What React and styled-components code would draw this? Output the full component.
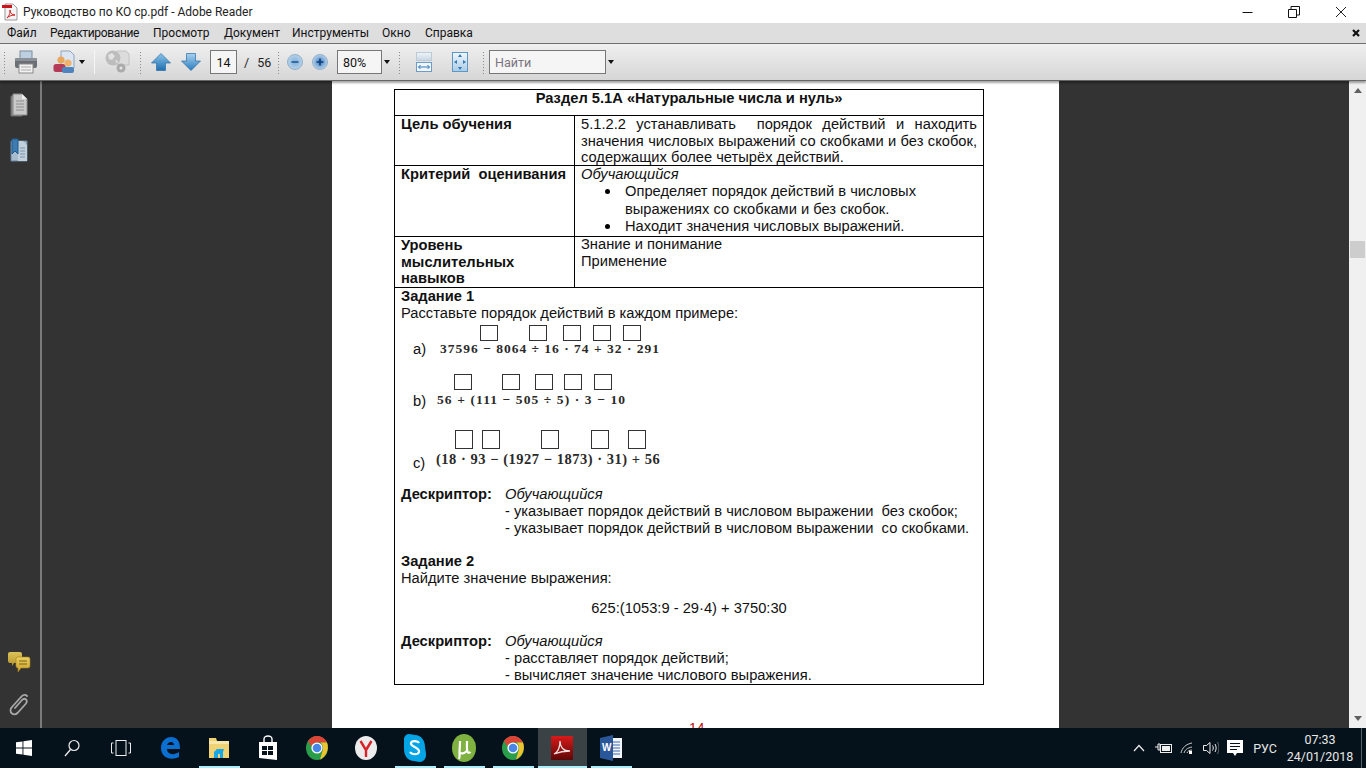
import React from "react";
import styled, { createGlobalStyle } from "styled-components";

const Global = createGlobalStyle`
  html, body { margin: 0; padding: 0; width: 1366px; height: 768px; overflow: hidden; background: #333; }
  * { box-sizing: border-box; }
`;
const UI = `Roboto, "Open Sans", "Liberation Sans", sans-serif`;
const DOC = `"Liberation Sans", Arial, sans-serif`;

const Screen = styled.div`width:1366px;height:768px;display:flex;flex-direction:column;overflow:hidden;`;
const TitleBar = styled.div`height:23px;background:#fff;display:flex;align-items:center;flex:none;`;
const TitleIcon = styled.span`display:flex;margin:0 5px 0 2px;`;
const TitleText = styled.span`font:12px ${UI};color:#222;flex:1;white-space:nowrap;`;
const WinBtn = styled.span`width:46px;height:23px;display:flex;align-items:center;justify-content:center;`;
const WinBtns = styled.div`display:flex;padding-right:2px;gap:1px;`;

const MenuBar = styled.div`height:21px;background:#dedede;border-bottom:1px solid #6f6f6f;display:flex;align-items:center;flex:none;padding-left:7px;`;
const MenuItem = styled.span`font:12px ${UI};color:#111;width:${p=>p.$w}px;letter-spacing:${p=>p.$ls||0}px;white-space:nowrap;`;
const MenuClose = styled.span`margin-left:auto;margin-right:6px;display:flex;`;

const Toolbar = styled.div`height:37px;flex:none;background:linear-gradient(#efefef,#d6d6d6);border-bottom:1px solid #666;display:flex;align-items:center;padding-left:3px;position:relative;z-index:2;box-shadow:0 2px 2px rgba(0,0,0,.35);`;
const Grip = styled.span`width:3px;height:23px;margin-left:${p=>p.$ml||0}px;flex:none;background-image:radial-gradient(#8c8c8c 0.7px,transparent 0.8px);background-size:3px 3px;`;
const Tool = styled.span`display:flex;flex:none;margin-left:${p=>p.$ml||0}px;`;
const Drop = styled.span`flex:none;margin-left:${p=>p.$ml||0}px;width:0;height:0;border-left:3.5px solid transparent;border-right:3.5px solid transparent;border-top:4px solid #111;`;
const Sep = styled.span`flex:none;width:1px;height:24px;background:#c4c4c4;border-right:1px solid #f6f6f6;margin-left:${p=>p.$ml||0}px;`;
const Field = styled.span`flex:none;height:24px;width:${p=>p.$w}px;margin-left:${p=>p.$ml||0}px;background:#f5f5f5;border:1px solid #777;font:12.5px ${UI};color:${p=>p.$muted?"#7c7480":"#111"};display:flex;align-items:center;justify-content:${p=>p.$center?"center":"flex-start"};padding-left:${p=>p.$center?0:5}px;`;
const PageOf = styled.span`flex:none;font:12.5px ${UI};color:#222;margin-left:7px;width:29px;word-spacing:5px;white-space:nowrap;`;

const Body = styled.div`flex:1;min-height:0;display:flex;background:#333;overflow:hidden;`;
const NavPane = styled.div`width:42px;flex:none;border-right:2px solid #7b7b7b;background:#333;display:flex;flex-direction:column;align-items:center;padding:12px 2px 0 0;`;
const NavSpacer = styled.div`flex:1;`;
const NavIcon = styled.span`display:flex;margin-bottom:${p=>p.$mb||0}px;`;
const Gutter = styled.div`flex:1;min-width:0;display:flex;padding-left:290px;overflow:hidden;`;
const Page = styled.div`width:727px;height:660px;background:#fff;flex:none;padding:8px 0 0 62px;`;
const Table = styled.div`width:590px;border:1px solid #000;font:14.7px/16.6px ${DOC};color:#111;display:flex;flex-direction:column;`;
const Head = styled.div`height:26px;font-weight:700;text-align:center;line-height:17px;border-bottom:1px solid #000;`;
const Row = styled.div`height:${p=>p.$h}px;display:grid;grid-template-columns:180px 1fr;border-bottom:1px solid #000;`;
const Label = styled.div`font-weight:700;padding:0 6px;border-right:1px solid #000;line-height:${p=>p.$lh||16.6}px;word-spacing:${p=>p.$ws||0}px;`;
const Cell = styled.div`padding:0 6px;line-height:${p=>p.$lh||16.6}px;margin-top:${p=>p.$dy||0}px;`;
const Just = styled.div`text-align:justify;`;
const Em = styled.i``;
const Bullets = styled.ul`margin:0;padding:0 0 0 44px;list-style:none;`;
const Bullet = styled.li`position:relative;padding-right:50px;&::before{content:"";position:absolute;left:-20px;top:6px;width:5px;height:5px;border-radius:50%;background:#000;}`;
const Task = styled.div`height:396px;padding:0 6px;line-height:17px;`;
const B = styled.b``;
const MathBlock = styled.div`margin-top:${p=>p.$mt}px;height:${p=>p.$h}px;`;
const Boxes = styled.div`display:flex;padding-left:${p=>p.$pl}px;`;
const Box = styled.span`flex:none;width:18px;height:${p=>p.$h||16}px;border:1px solid #333;margin-left:${p=>p.$ml||0}px;`;
const FormulaLine = styled.div`display:flex;align-items:flex-start;margin-top:${p=>p.$mt||0}px;padding-left:12px;`;
const Letter = styled.span`width:${p=>p.$w}px;flex:none;margin-top:${p=>p.$dy||0}px;`;
const Formula = styled.span`font:700 ${p=>p.$fs}px/16px "Liberation Serif", serif;color:#2a2a2a;letter-spacing:${p=>p.$ls||0}px;margin-top:${p=>p.$dy||0}px;white-space:nowrap;`;
const Gap = styled.div`height:${p=>p.$h}px;`;
const Desc = styled.div`display:grid;grid-template-columns:104px 1fr;`;
const Center = styled.div`text-align:center;`;
const PageNo = styled.div`margin:35px 0 0 0;width:590px;padding-left:295px;font:14px/16px ${DOC};color:#b11;`;

const ScrollBar = styled.div`width:17px;flex:none;background:#f0f0f0;position:relative;display:flex;flex-direction:column;align-items:center;justify-content:space-between;padding:7px 0;`;
const Thumb = styled.div`position:absolute;left:1px;top:160px;width:15px;height:17px;background:#cdcdcd;`;
const Arrow = styled.span`width:0;height:0;border-left:4px solid transparent;border-right:4px solid transparent;${p=>p.$down?"border-top:5px solid #606060;":"border-bottom:5px solid #606060;"}`;

const TaskBar = styled.div`height:40px;flex:none;background:#06121b;display:flex;align-items:stretch;position:relative;z-index:3;`;
const TBtn = styled.span`width:${p=>p.$w||49}px;flex:none;display:flex;align-items:center;justify-content:center;position:relative;background:${p=>p.$active?"#3a4246":"transparent"};
  ${p=>p.$open?`&::after{content:"";position:absolute;left:${p.$active?0:4}px;right:${p.$active?0:4}px;bottom:0;height:2px;background:#a9eefa;}`:""}`;
const Tray = styled.div`margin-left:auto;display:flex;align-items:center;color:#fff;`;
const TrayIcon = styled.span`display:flex;width:${p=>p.$w}px;justify-content:center;`;
const Lang = styled.span`font:12.5px ${UI};color:#e8e8e8;width:36px;text-align:center;`;
const Clock = styled.div`width:74px;font:12.5px/17px ${UI};color:#e8e8e8;text-align:center;`;
const Desktop = styled.span`width:5px;align-self:stretch;border-left:1px solid #59626a;margin-left:4px;`;

/* ---------- icons ---------- */
const PdfDoc = () => (
  <svg width="16" height="18" viewBox="0 0 16 18"><path d="M3 1h8l4 4v12H3z" fill="#f4f4f4" stroke="#999"/><rect x="0" y="2" width="10" height="3" fill="#c8141a"/><path d="M5 15c3-3 3-6 3-8 0 3 2 5 5 5-3 0-6 1-8 3z" fill="none" stroke="#d01c1c" strokeWidth="1"/></svg>
);
const Minimize = () => <svg width="12" height="12"><path d="M1.500 6.500h10" stroke="#111" strokeWidth="1"/></svg>;
const Restore = () => <svg width="12" height="12"><path d="M.5 3.500h8v8h-8zM3 3V.5h8.500V9H9" fill="none" stroke="#111"/></svg>;
const CloseX = () => <svg width="12" height="12"><path d="M1 1l10 10M11 1L1 11" stroke="#222" strokeWidth="1"/></svg>;
const SmallX = () => <svg width="8" height="8"><path d="M1 1l6 6M7 1L1 7" stroke="#111" strokeWidth="2.200"/></svg>;

const Print = () => (
  <svg width="24" height="24" viewBox="0 0 24 24"><rect x="6" y="1" width="12" height="8" fill="#bcd0e2" stroke="#7f8e9b"/><rect x="1" y="8" width="22" height="10" rx="2" fill="#6a6f75"/><rect x="1" y="8" width="22" height="3" rx="1" fill="#8b9096"/><rect x="5" y="14" width="14" height="9" fill="#f2f2f2" stroke="#8a8a8a"/><path d="M7 17h10M7 20h10" stroke="#aaa"/></svg>
);
const Share = () => (
  <svg width="24" height="24" viewBox="0 0 24 24"><path d="M9 1h9l4 4v13H9z" fill="#dbe6f2" stroke="#8ea4bb"/><circle cx="9" cy="10" r="3.600" fill="#eba65a"/><rect x="1.500" y="14" width="12" height="8" rx="2.500" fill="#b33b58"/><circle cx="16" cy="13" r="3.600" fill="#f0b26a"/><rect x="10" y="17" width="12" height="6" rx="2" fill="#4d84bd"/></svg>
);
const Globe = () => (
  <svg width="26" height="24" viewBox="0 0 26 24"><path d="M13 1h9l3 3v11H13z" fill="#dcdcdc" stroke="#c2c2c2"/><circle cx="9" cy="8" r="7.500" fill="#bdbdbd"/><path d="M4 5l4-2 3 3-3 4-3-1zM11 10l3 1-1 3z" fill="#e2e2e2"/><circle cx="17" cy="18" r="4.500" fill="#ababab"/><circle cx="17" cy="18" r="1.500" fill="#e6e6e6"/></svg>
);
const Grad = ({ id, a, b }) => <linearGradient id={id} x1="0" y1="0" x2="0" y2="1"><stop offset="0" stopColor={a}/><stop offset="1" stopColor={b}/></linearGradient>;
const UpArrow = () => (
  <svg width="20" height="20" viewBox="0 0 20 20"><defs><Grad id="u" a="#8cc4ea" b="#1e6eb0"/></defs><path d="M10 1.500L19.500 11H14.500V18.500H5.500V11H.5z" fill="url(#u)" stroke="#2a6ea6" strokeWidth=".7"/></svg>
);
const DownArrow = () => (
  <svg width="20" height="20" viewBox="0 0 20 20"><defs><Grad id="d" a="#a8d2f0" b="#2a7cbe"/></defs><path d="M5.500 1.500H14.500V9H19.500L10 18.500.5 9H5.500z" fill="url(#d)" stroke="#2a6ea6" strokeWidth=".7"/></svg>
);
const ZoomBtn = ({ plus }) => (
  <svg width="16" height="16" viewBox="0 0 16 16"><defs><radialGradient id={plus?"zp":"zm"}><stop offset="0" stopColor={plus?"#3d7fc7":"#7fb0dc"}/><stop offset="1" stopColor="#b9d2e8"/></radialGradient></defs><circle cx="8" cy="8" r="7.500" fill={`url(#${plus?"zp":"zm"})`} stroke="#8fb0cc"/><path d={plus?"M4.500 8h7M8 4.500v7":"M4.500 8h7"} stroke={plus?"#0e3e78":"#1d5a94"} strokeWidth="1.600"/></svg>
);
const FitWidth = () => (
  <svg width="16" height="20" viewBox="0 0 16 20"><defs><Grad id="fw" a="#f2f4f6" b="#c5d6e6"/></defs><rect x=".5" y=".5" width="15" height="8" fill="url(#fw)" stroke="#bccbd8"/><rect x=".5" y="10.500" width="15" height="9" fill="#f2f6fa" stroke="#6b9bc6"/><path d="M2.500 15h11M2.500 15l2-2M2.500 15l2 2M13.500 15l-2-2M13.500 15l-2 2" stroke="#2d78b8" fill="none"/></svg>
);
const FullFit = () => (
  <svg width="16" height="20" viewBox="0 0 16 20"><defs><Grad id="ff" a="#f2f7fb" b="#a9cbe6"/></defs><rect x=".5" y=".5" width="15" height="19" fill="url(#ff)" stroke="#5f97c4"/><path d="M8 2l-2 3h4zM8 18l-2-3h4zM2 10l3-2v4zM14 10l-3-2v4z" fill="#2d78b8"/></svg>
);
const NavPages = () => (
  <svg width="18" height="24" viewBox="0 0 18 24"><path d="M1 3h11v20H1z" fill="#8d8d8d" stroke="#6a6a6a"/><path d="M3 1h9l5 5v16H3z" fill="#c9c9c9" stroke="#8a8a8a"/><path d="M12 1v5h5z" fill="#eee"/><path d="M6 8h8M6 11h8M6 14h8M6 17h8" stroke="#8e8e8e"/></svg>
);
const NavBookmarks = () => (
  <svg width="18" height="24" viewBox="0 0 18 24"><path d="M1 3h16v20H1z" fill="#a9bccd" stroke="#64819b"/><path d="M8 3h5l4 4v16H8z" fill="#c2d0dd"/><path d="M2 1h6v15l-3-3-3 3z" fill="#3d7bb0" stroke="#1f5a8c"/><path d="M10 10h5M10 13h5M10 16h5M10 19h5" stroke="#7d93a8"/></svg>
);
const NavComments = () => (
  <svg width="24" height="21" viewBox="0 0 24 21"><defs><Grad id="cb" a="#dcc25a" b="#b7962a"/><Grad id="cf" a="#ecd060" b="#c9a02c"/></defs><path d="M1 2a2 2 0 0 1 2-2h10a2 2 0 0 1 2 2v7a2 2 0 0 1-2 2H7l-2 3v-3H3a2 2 0 0 1-2-2z" fill="url(#cb)"/><path d="M9 7a2 2 0 0 1 2-2h10a2 2 0 0 1 2 2v7a2 2 0 0 1-2 2H14l-3 4v-4a2 2 0 0 1-2-2z" fill="url(#cf)" stroke="#a3801d" strokeWidth=".6"/><path d="M12 9h8M12 12h8" stroke="#7c6215"/></svg>
);
const NavClip = () => (
  <svg width="22" height="24" viewBox="0 0 22 24"><path d="M19 3c-2-2-4-1-6 1L4 14c-2 2-2 5 0 6.500s4 1 6-1l8-9c1-1.500 1-3 0-4s-2.500-1-4 .5L7 15" fill="none" stroke="#a8a8a8" strokeWidth="1.800" strokeLinecap="round"/></svg>
);

const WinLogo = () => <svg width="16" height="16" viewBox="0 0 16 16"><path d="M0 2.300 6.500 1.400v6.200H0zM7.400 1.300 16 0v7.600H7.400zM0 8.400h6.500v6.200L0 13.700zM7.400 8.400H16V16l-8.600-1.300z" fill="#fff"/></svg>;
const SearchGl = () => <svg width="16" height="18" viewBox="0 0 16 18"><circle cx="10" cy="6.500" r="5" fill="none" stroke="#eee" strokeWidth="1.200"/><path d="M6.500 10.500 1 17" stroke="#eee" strokeWidth="1.300"/></svg>;
const TaskView = () => <svg width="20" height="16" viewBox="0 0 20 16"><rect x="5" y=".5" width="10" height="15" fill="none" stroke="#eee"/><path d="M2.500 3H.5v10h2M17.500 3h2v10h-2" fill="none" stroke="#eee"/></svg>;
const Edge = () => <svg width="20" height="22" viewBox="0 0 20 22"><path d="M1 11C1 4 6 0 11 0c6 0 9 4 9 12H7c0 5 6 7 12 3v5c-8 4-18 1-18-9zM7 8h7c0-4-6-4-7 0z" fill="#0a6fd0"/></svg>;
const Folder = () => <svg width="22" height="22" viewBox="0 0 22 22"><path d="M1 1h7l1 3h12v17H1z" fill="#f0d374"/><path d="M1 4h20v3H1z" fill="#f7e7a8"/><path d="M6 21v-6l3-3h7l-1 3v6h-3v-4h-2v4z" fill="#19a8e6"/></svg>;
const Store = () => <svg width="20" height="26" viewBox="0 0 20 26"><path d="M1 7h18v18L1 23z" fill="#fff"/><path d="M6 7V4a4 3 0 0 1 8 0v3" fill="none" stroke="#fff" strokeWidth="1.400"/><path d="M4 11h5v4H4zM10 11h5v4h-5zM4 16h5v4H4zM10 16h5v4h-5z" fill="#06121b"/></svg>;
const Chrome = () => <svg width="22" height="24" viewBox="0 0 22 24"><ellipse cx="11" cy="12" rx="11" ry="12" fill="#2a9d4a"/><path d="M11 0c4.500 0 8 2.500 10 6.500H11C8 6.500 6 8.500 5.500 10.500L2 5C4 2 7 0 11 0z" fill="#dc4437"/><path d="M21 6.500c2 5 .500 13-7 17l3-10c.500-3-1-6-2.500-7z" fill="#f2c12e"/><circle cx="11" cy="12" r="5.600" fill="#fff"/><circle cx="11" cy="12" r="4.300" fill="#4a85e8"/></svg>;
const Yandex = () => <svg width="22" height="24" viewBox="0 0 22 24"><ellipse cx="11" cy="12" rx="11" ry="12" fill="#ececec"/><path d="M5.500 5l5.500 9v7M16.500 5 11 14" fill="none" stroke="#d8232a" strokeWidth="2.400"/></svg>;
const Skype = () => <svg width="22" height="28" viewBox="0 0 22 28"><path d="M5 0c3 0 4 1 6 1 6 0 10 5 10 12 0 2 1 4 1 8 0 4-3 7-6 7-3 0-4-1-6-1C4 27 0 22 0 15c0-2-.500-4-.500-8C-.500 3 2 0 5 0z" fill="#04a5e6"/><path d="M15 9c-1-2-7-3-8 0-1 4 9 4 8 9-1 3-7 3-9 0" fill="none" stroke="#fff" strokeWidth="2.200"/></svg>;
const UTorrent = () => <svg width="24" height="28" viewBox="0 0 24 28"><ellipse cx="12" cy="14" rx="12" ry="14" fill="#7eb13f"/><path d="M8 7c0 5-.500 9-.500 11M7 25c1-2 .5-5 .5-7 .5 2 5 2 7-1M15 7c0 4-.500 8 .500 11 .5 1 2 1 3 0" fill="none" stroke="#fff" strokeWidth="2.200"/></svg>;
const Acrobat = () => <svg width="22" height="24" viewBox="0 0 22 24"><defs><Grad id="ac" a="#d81a1a" b="#5e0606"/></defs><rect width="22" height="24" rx="1" fill="url(#ac)"/><path d="M3 18c4-2 6-7 6-13 0 6 3 10 10 10-6 0-11 1-16 3z" fill="none" stroke="#f2dede" strokeWidth="1.300"/></svg>;
const Word = () => <svg width="22" height="26" viewBox="0 0 22 26"><path d="M8 3h14v20H8z" fill="#f2f6fb"/><path d="M12 7h8M12 10h8M12 13h8M12 16h8M12 19h8" stroke="#3a6bb0"/><path d="M0 3l13-3v26L0 23z" fill="#2a579a"/><text x="2" y="16" fontFamily="Liberation Sans" fontSize="10" fontWeight="700" fill="#fff">W</text></svg>;

const Chevron = () => <svg width="12" height="8" viewBox="0 0 12 8"><path d="M1 7l5-5.500L11 7" fill="none" stroke="#eee" strokeWidth="1.200"/></svg>;
const Battery = () => <svg width="17" height="12" viewBox="0 0 17 12"><rect x="5.500" y="2.500" width="11" height="8" fill="none" stroke="#eee"/><rect x="7" y="4" width="8" height="5" fill="#eee"/><path d="M0 5h3M3 2v6M3 2h2v6H3" stroke="#eee" fill="none"/></svg>;
const Wifi = () => <svg width="14" height="14" viewBox="0 0 14 14"><path d="M1 12C2 7 6 3 12 2M4 12c1-3 3-5 8-6M7 12c.500-1.500 2-3 5-3" fill="none" stroke="#ccc"/><rect x="9" y="10" width="3" height="3" fill="#fff"/></svg>;
const Volume = () => <svg width="16" height="14" viewBox="0 0 16 14"><path d="M.5 4.500h3L7 1.500v11l-3.500-3h-3z" fill="none" stroke="#eee"/><path d="M9.500 4.500c1 1.500 1 3.500 0 5M12 3c1.500 2.500 1.500 5.500 0 8" fill="none" stroke="#eee"/><path d="M14.500 1c2 3.500 2 8.500 0 12" fill="none" stroke="#666"/></svg>;
const Note = () => <svg width="16" height="17" viewBox="0 0 16 17"><path d="M0 0h16v13H10l-2 3-2-3H0z" fill="#fff"/><path d="M3 3.500h10M3 6.500h10M3 9.500h7" stroke="#06121b"/></svg>;

export default function App() {
  return (
    <Screen>
      <Global />
      <TitleBar>
        <TitleIcon><PdfDoc /></TitleIcon>
        <TitleText>Руководство по КО ср.pdf - Adobe Reader</TitleText>
        <WinBtns>
          <WinBtn><Minimize /></WinBtn>
          <WinBtn><Restore /></WinBtn>
          <WinBtn><CloseX /></WinBtn>
        </WinBtns>
      </TitleBar>
      <MenuBar>
        <MenuItem $w={43}>Файл</MenuItem>
        <MenuItem $w={103} $ls={-0.35}>Редактирование</MenuItem>
        <MenuItem $w={71}>Просмотр</MenuItem>
        <MenuItem $w={68}>Документ</MenuItem>
        <MenuItem $w={90}>Инструменты</MenuItem>
        <MenuItem $w={43}>Окно</MenuItem>
        <MenuItem $w={60}>Справка</MenuItem>
        <MenuClose><SmallX /></MenuClose>
      </MenuBar>
      <Toolbar>
        <Grip />
        <Tool $ml={8}><Print /></Tool>
        <Tool $ml={14}><Share /></Tool>
        <Drop $ml={3} />
        <Sep $ml={9} />
        <Tool $ml={9}><Globe /></Tool>
        <Grip $ml={9} />
        <Tool $ml={9}><UpArrow /></Tool>
        <Tool $ml={10}><DownArrow /></Tool>
        <Field $w={27} $ml={9} $center>14</Field>
        <PageOf>/ 56</PageOf>
        <Grip $ml={4} />
        <Tool $ml={7}><ZoomBtn /></Tool>
        <Tool $ml={9}><ZoomBtn plus /></Tool>
        <Field $w={45} $ml={9}>80%</Field>
        <Drop $ml={2} />
        <Grip $ml={8} />
        <Tool $ml={15}><FitWidth /></Tool>
        <Tool $ml={20}><FullFit /></Tool>
        <Grip $ml={14} />
        <Field $w={117} $ml={4} $muted>Найти</Field>
        <Drop $ml={2} />
      </Toolbar>
      <Body>
        <NavPane>
          <NavIcon $mb={21}><NavPages /></NavIcon>
          <NavIcon><NavBookmarks /></NavIcon>
          <NavSpacer />
          <NavIcon $mb={20}><NavComments /></NavIcon>
          <NavIcon $mb={11}><NavClip /></NavIcon>
        </NavPane>
        <Gutter>
          <Page>
            <Table>
              <Head>Раздел 5.1А «Натуральные числа и нуль»</Head>
              <Row $h={50}>
                <Label>Цель обучения</Label>
                <Cell><Just>5.1.2.2 устанавливать&nbsp; порядок действий и находить значения числовых выражений со скобками и без скобок, содержащих более четырёх действий.</Just></Cell>
              </Row>
              <Row $h={71}>
                <Label $ws={4}>Критерий оценивания</Label>
                <Cell $lh={17.3}>
                  <Em>Обучающийся</Em>
                  <Bullets>
                    <Bullet>Определяет порядок действий в числовых выражениях со скобками и без скобок.</Bullet>
                    <Bullet>Находит значения числовых выражений.</Bullet>
                  </Bullets>
                </Cell>
              </Row>
              <Row $h={51}>
                <Label>Уровень мыслительных навыков</Label>
                <Cell $dy={-1}>Знание и понимание<br />Применение</Cell>
              </Row>
              <Task>
                <B>Задание 1</B><br />
                Расставьте порядок действий в каждом примере:
                <MathBlock $mt={3} $h={46}>
                  <Boxes $pl={79}>
                    <Box /><Box $ml={31} /><Box $ml={16} /><Box $ml={12} /><Box $ml={12} />
                  </Boxes>
                  <FormulaLine>
                    <Letter $w={27}>a)</Letter>
                    <Formula $fs={13.500} $ls={1}>37596 − 8064 ÷ 16 · 74 + 32 · 291</Formula>
                  </FormulaLine>
                </MathBlock>
                <MathBlock $mt={3} $h={54}>
                  <Boxes $pl={53}>
                    <Box /><Box $ml={30} /><Box $ml={15} /><Box $ml={11} /><Box $ml={12} />
                  </Boxes>
                  <FormulaLine>
                    <Letter $w={24} $dy={3}>b)</Letter>
                    <Formula $fs={13.500} $ls={1.100} $dy={2}>56 + (111 − 505 ÷ 5) · 3 − 10</Formula>
                  </FormulaLine>
                </MathBlock>
                <MathBlock $mt={2} $h={56}>
                  <Boxes $pl={54}>
                    <Box $h={19} /><Box $h={19} $ml={9} /><Box $h={19} $ml={41} /><Box $h={19} $ml={32} /><Box $h={19} $ml={19} />
                  </Boxes>
                  <FormulaLine $mt={2}>
                    <Letter $w={23} $dy={4}>c)</Letter>
                    <Formula $fs={14.500} $ls={0.520}>(18 · 93 − (1927 − 1873) · 31) + 56</Formula>
                  </FormulaLine>
                </MathBlock>
                <Desc>
                  <B>Дескриптор:</B>
                  <Em>Обучающийся</Em>
                  <span /><span>- указывает порядок действий в числовом выражении&nbsp; без скобок;</span>
                  <span /><span>- указывает порядок действий в числовом выражении&nbsp; со скобками.</span>
                </Desc>
                <Gap $h={16} />
                <B>Задание 2</B><br />
                Найдите значение выражения:
                <Gap $h={13} />
                <Center>625:(1053:9 - 29·4) + 3750:30</Center>
                <Gap $h={16} />
                <Desc>
                  <B>Дескриптор:</B>
                  <Em>Обучающийся</Em>
                  <span /><span>- расставляет порядок действий;</span>
                  <span /><span>- вычисляет значение числового выражения.</span>
                </Desc>
              </Task>
            </Table>
            <PageNo>14</PageNo>
          </Page>
        </Gutter>
        <ScrollBar>
          <Arrow />
          <Thumb />
          <Arrow $down />
        </ScrollBar>
      </Body>
      <TaskBar>
        <TBtn $w={48}><WinLogo /></TBtn>
        <TBtn $w={48}><SearchGl /></TBtn>
        <TBtn $w={49.500}><TaskView /></TBtn>
        <TBtn><Edge /></TBtn>
        <TBtn $open><Folder /></TBtn>
        <TBtn><Store /></TBtn>
        <TBtn><Chrome /></TBtn>
        <TBtn><Yandex /></TBtn>
        <TBtn $open><Skype /></TBtn>
        <TBtn $open><UTorrent /></TBtn>
        <TBtn $open><Chrome /></TBtn>
        <TBtn $open $active><Acrobat /></TBtn>
        <TBtn $open><Word /></TBtn>
        <Tray>
          <TrayIcon $w={24}><Chevron /></TrayIcon>
          <TrayIcon $w={24}><Battery /></TrayIcon>
          <TrayIcon $w={24}><Wifi /></TrayIcon>
          <TrayIcon $w={24}><Volume /></TrayIcon>
          <TrayIcon $w={24}><Note /></TrayIcon>
          <Lang>РУС</Lang>
          <Clock>07:33<br />24/01/2018</Clock>
          <Desktop />
        </Tray>
      </TaskBar>
    </Screen>
  );
}
